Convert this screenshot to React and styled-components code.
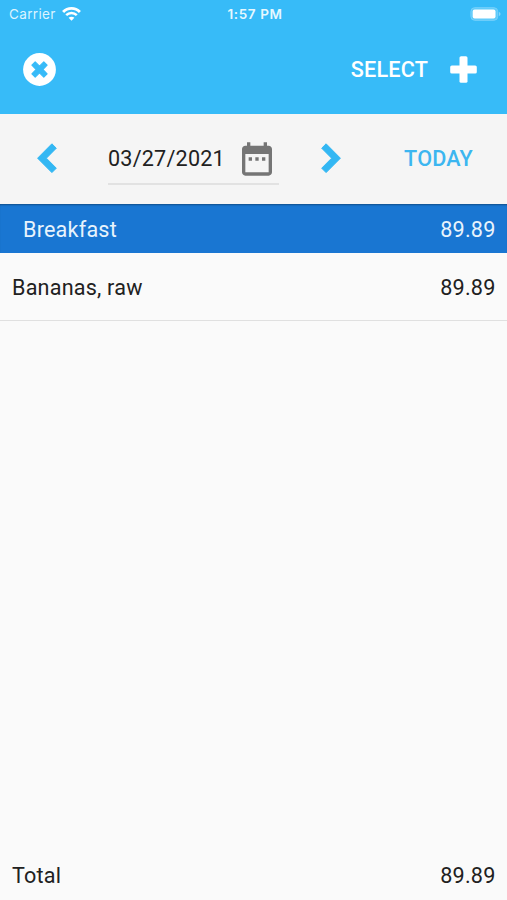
import React from 'react';
import styled, { createGlobalStyle } from 'styled-components';

const entries = [{ id: 1, name: 'Bananas, raw', amount: '89.89' }];

const WifiIcon = () => (
  <svg width="19" height="15" viewBox="0 0 19 15" fill="none" stroke="#fff">
    <path d="M1.1 6C5.8 1.1 13.2 1.1 17.9 6" strokeWidth="2.9" />
    <path d="M4.2 9.2C7.2 6.2 11.8 6.2 14.8 9.2" strokeWidth="2.5" />
    <path d="M9.5 14.7L6.6 11.8C8.2 10.4 10.8 10.4 12.4 11.8Z" fill="#fff" stroke="none" />
  </svg>
);

const BatteryIcon = () => (
  <svg width="31" height="14" viewBox="0 0 31 14">
    <rect x="0.9" y="0.7" width="26.8" height="12.6" rx="3.8" fill="#5fcbfa" stroke="#78d1fa" strokeWidth="1" />
    <rect x="2.7" y="2.5" width="22.8" height="9" rx="2" fill="#fff" />
    <path d="M28.9 5v4c1-.4 1.6-1.1 1.6-2s-.6-1.6-1.6-2z" fill="#86d6fa" />
  </svg>
);

const CloseIcon = () => (
  <svg width="33" height="33" viewBox="0 0 33 33">
    <circle cx="16.5" cy="16.5" r="16.4" fill="#fff" />
    <path
      d="M12.2 8.9L16.5 13.2L20.8 8.9L24.1 12.2L19.8 16.5L24.1 20.8L20.8 24.1L16.5 19.8L12.2 24.1L8.9 20.8L13.2 16.5L8.9 12.2Z"
      fill="#37bbf8"
      stroke="#37bbf8"
      strokeWidth="1.2"
      strokeLinejoin="round"
    />
  </svg>
);

const PlusIcon = () => (
  <svg width="27" height="27" viewBox="0 0 27 27" fill="#fff">
    <rect x="9.5" y="0.2" width="8" height="26.6" rx="1.6" />
    <rect x="0.2" y="9.5" width="26.6" height="8" rx="1.6" />
  </svg>
);

const ChevronIcon = ({ points }) => (
  <svg width="20" height="31" viewBox="0 0 20 31">
    <polygon points={points} fill="#33b7f3" stroke="#33b7f3" strokeWidth="1" strokeLinejoin="round" />
  </svg>
);

const CalendarIcon = () => (
  <svg width="40" height="40" viewBox="0 0 24 24" fill="#757575">
    <path d="M9 11H7v2h2v-2zm4 0h-2v2h2v-2zm4 0h-2v2h2v-2zm2-7h-1V2h-2v2H8V2H6v2H5c-1.11 0-1.99.9-1.99 2L3 20c0 1.1.89 2 2 2h14c1.1 0 2-.9 2-2V6c0-1.1-.9-2-2-2zm0 16H5V9h14v11z" />
  </svg>
);

const App = () => (
  <>
    <GlobalStyle />
    <Screen>
      <Header>
        <StatusBar>
          <Carrier>
            <CarrierName>Carrier</CarrierName>
            <WifiIcon />
          </Carrier>
          <Clock>1:57 PM</Clock>
          <Battery>
            <BatteryIcon />
          </Battery>
        </StatusBar>
        <AppBar>
          <IconButton aria-label="Close">
            <CloseIcon />
          </IconButton>
          <Actions>
            <TextButton $color="#fff">SELECT</TextButton>
            <IconButton aria-label="Add">
              <PlusIcon />
            </IconButton>
          </Actions>
        </AppBar>
      </Header>

      <DateBar>
        <IconButton aria-label="Previous day">
          <ChevronIcon points="14.9,0.8 19.3,5.2 9.4,15.2 19.3,25.2 14.9,29.6 0.6,15.2" />
        </IconButton>
        <DateField>
          <DateText>03/27/2021</DateText>
          <CalendarIcon />
        </DateField>
        <IconButton aria-label="Next day">
          <ChevronIcon points="5.1,0.8 0.7,5.2 10.6,15.2 0.7,25.2 5.1,29.6 19.4,15.2" />
        </IconButton>
        <TodayButton $color="#3cb6f0">TODAY</TodayButton>
      </DateBar>

      <MealHeader>
        <span>Breakfast</span>
        <Amount>89.89</Amount>
      </MealHeader>
      <EntryList>
        {entries.map((entry) => (
          <Entry key={entry.id}>
            <span>{entry.name}</span>
            <Amount>{entry.amount}</Amount>
          </Entry>
        ))}
      </EntryList>
      <TotalRow>
        <span>Total</span>
        <Amount>89.89</Amount>
      </TotalRow>
    </Screen>
  </>
);

const GlobalStyle = createGlobalStyle`
  * {
    box-sizing: border-box;
  }

  body {
    margin: 0;
    background: #fafafa;
  }

  svg {
    display: block;
    flex-shrink: 0;
  }
`;

const Screen = styled.div`
  display: flex;
  flex-direction: column;
  width: 507px;
  height: 900px;
  background: #fafafa;
  color: #212121;
  font-family: Roboto, sans-serif;
  font-size: 21.6px;
  letter-spacing: 0.2px;
  line-height: 32px;
`;

const Header = styled.header`
  height: 114px;
  background: #37bbf8;
  color: #fff;
`;

const StatusBar = styled.div`
  display: grid;
  grid-template-columns: 1fr auto 1fr;
  align-items: center;
  height: 27px;
  padding: 0 6px 0 9px;
  font-family: Inter, sans-serif;
  font-size: 13.5px;
  line-height: 18px;
`;

const Carrier = styled.div`
  display: flex;
  align-items: center;
  gap: 6px;
`;

const CarrierName = styled.span`
  color: #dcf4ff;
  letter-spacing: 0.35px;
`;

const Clock = styled.span`
  color: #e6f8ff;
  font-size: 13.5px;
  font-weight: 600;
  letter-spacing: 0.6px;
`;

const Battery = styled.div`
  justify-self: end;
`;

const AppBar = styled.div`
  display: flex;
  align-items: center;
  justify-content: space-between;
  height: 84px;
  padding: 0 30px 0 23px;
`;

const Actions = styled.div`
  display: flex;
  align-items: center;
  gap: 22px;
`;

const IconButton = styled.button`
  padding: 0;
  border: none;
  background: none;
  cursor: pointer;
`;

const TextButton = styled.button`
  padding: 2px 0 0;
  border: none;
  background: none;
  color: ${(props) => props.$color};
  font: inherit;
  font-weight: 500;
  letter-spacing: 0.2px;
  cursor: pointer;
`;

const DateBar = styled.div`
  display: flex;
  align-items: center;
  height: 90px;
  padding: 0 34px 2px 37px;
  background: #f5f5f5;
`;

const DateField = styled.div`
  display: flex;
  align-items: center;
  justify-content: space-between;
  width: 171px;
  height: 54px;
  margin: 0 42px 0 51px;
  padding: 3px 2px 0 0;
  border-bottom: 2px solid #e2e2e2;
`;

const DateText = styled.span`
  padding-top: 1px;
  color: #212121;
`;

const TodayButton = styled(TextButton)`
  margin-left: auto;
`;

const Row = styled.div`
  display: flex;
  align-items: center;
  justify-content: space-between;
  flex-shrink: 0;
  padding: 2px 12px 0;
`;

const Amount = styled.span`
  margin-right: -0.5px;
`;

const MealHeader = styled(Row)`
  height: 49px;
  padding-left: 23px;
  background: #1976d2;
  box-shadow: inset 0 2px 2px -1px rgba(0, 0, 0, 0.35);
  color: #e8f3fc;
`;

const EntryList = styled.div`
  flex: 1;
`;

const Entry = styled(Row)`
  height: 68px;
  border-bottom: 1px solid #e0e0e0;
`;

const TotalRow = styled(Row)`
  height: 50px;
`;

export default App;
